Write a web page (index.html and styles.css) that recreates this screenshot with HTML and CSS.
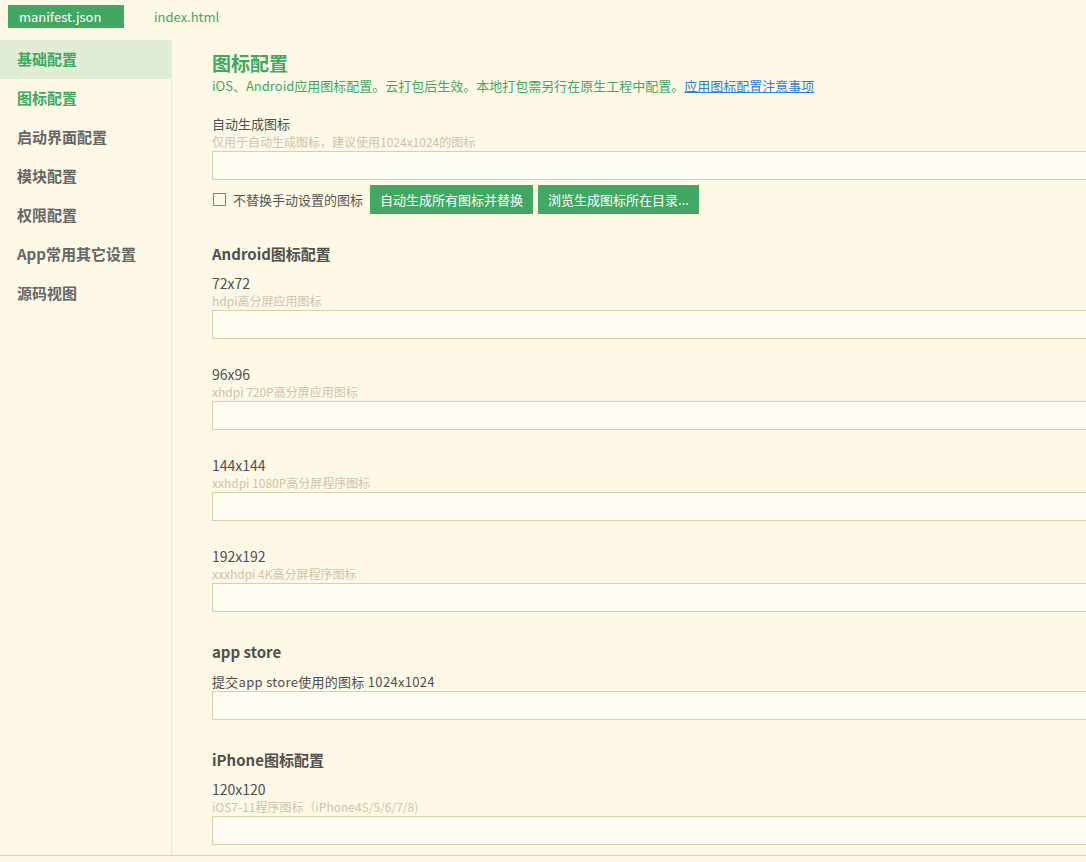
FILE: index.html
```html
<!DOCTYPE html>
<html lang="zh-CN">
<head>
<meta charset="utf-8">
<title>manifest.json</title>
<link rel="stylesheet" href="styles.css">
</head>
<body>
<div class="tabs">
  <div class="tab tab-active">manifest.json</div>
  <div class="tab">index.html</div>
</div>
<div class="main">
  <nav class="sidebar">
    <div class="nav-item nav-active">基础配置</div>
    <div class="nav-item nav-current">图标配置</div>
    <div class="nav-item">启动界面配置</div>
    <div class="nav-item">模块配置</div>
    <div class="nav-item">权限配置</div>
    <div class="nav-item">App常用其它设置</div>
    <div class="nav-item">源码视图</div>
  </nav>
  <section class="content">
    <h1 class="title">图标配置</h1>
    <div class="desc">iOS、Android应用图标配置。云打包后生效。本地打包需另行在原生工程中配置。<a class="link" href="#">应用图标配置注意事项</a></div>

    <div class="field field-first">
      <div class="label label-cjk">自动生成图标</div>
      <div class="hint">仅用于自动生成图标，建议使用1024x1024的图标</div>
      <div class="input"></div>
    </div>
    <div class="actions">
      <span class="checkbox"></span>
      <span class="check-label">不替换手动设置的图标</span>
      <span class="btn">自动生成所有图标并替换</span>
      <span class="btn">浏览生成图标所在目录...</span>
    </div>

    <h2 class="section-title">Android图标配置</h2>
    <div class="field">
      <div class="label">72x72</div>
      <div class="hint">hdpi高分屏应用图标</div>
      <div class="input"></div>
    </div>
    <div class="field">
      <div class="label">96x96</div>
      <div class="hint">xhdpi 720P高分屏应用图标</div>
      <div class="input"></div>
    </div>
    <div class="field">
      <div class="label">144x144</div>
      <div class="hint">xxhdpi 1080P高分屏程序图标</div>
      <div class="input"></div>
    </div>
    <div class="field">
      <div class="label">192x192</div>
      <div class="hint">xxxhdpi 4K高分屏程序图标</div>
      <div class="input"></div>
    </div>

    <h2 class="section-title">app store</h2>
    <div class="field field-store">
      <div class="label label-mixed">提交app store使用的图标 1024x1024</div>
      <div class="input"></div>
    </div>

    <h2 class="section-title">iPhone图标配置</h2>
    <div class="field">
      <div class="label">120x120</div>
      <div class="hint">iOS7-11程序图标（iPhone4S/5/6/7/8)</div>
      <div class="input"></div>
    </div>
  </section>
</div>
</body>
</html>
```
FILE: styles.css
```css
html, body {
  margin: 0;
  padding: 0;
}
body {
  background: #fef8e6;
  font-family: "Noto Sans CJK SC", "Noto Sans", sans-serif;
  color: #555555;
  overflow: hidden;
  width: 1086px;
  height: 862px;
}
.tabs {
  height: 40px;
  box-sizing: border-box;
  padding: 5px 0 0 8px;
  display: flex;
  align-items: flex-start;
  gap: 30px;
}
.tab {
  height: 23px;
  line-height: 23px;
  font-size: 13px;
  color: #3fa863;
}
.tab-active {
  width: 116px;
  box-sizing: border-box;
  padding-left: 11px;
  background: #40a863;
  color: #ffffff;
}
.main {
  display: flex;
  height: 816px;
  border-bottom: 1px solid #dcd1a8;
  box-sizing: border-box;
}
.sidebar {
  width: 172px;
  flex: none;
  box-sizing: border-box;
  border-right: 1px solid #efe8d2;
}
.nav-item {
  height: 39px;
  line-height: 38px;
  padding-left: 17px;
  font-size: 15px;
  font-weight: bold;
  color: #666666;
}
.nav-active {
  background: #e0ecd3;
  color: #3fa863;
}
.nav-current {
  color: #3fa863;
}
.content {
  flex: 1;
  padding: 11px 0 0 40px;
  min-width: 0;
}
.title {
  margin: 0;
  font-size: 19px;
  line-height: 24px;
  font-weight: bold;
  color: #3fa863;
}
.desc {
  margin-top: 2px;
  font-size: 13px;
  line-height: 18px;
  color: #3fa863;
}
.link {
  color: #2b7fd6;
  text-decoration: underline;
}
.field {
  margin-top: 26px;
}
.field-first {
  margin-top: 20px;
}
.label {
  font-size: 14px;
  line-height: 18px;
  color: #4f4f4f;
}
.label-cjk,
.label-mixed {
  font-size: 13px;
}
.label-mixed {
  letter-spacing: 0.3px;
}
.hint {
  font-size: 12px;
  line-height: 18px;
  color: #cdc5ab;
}
.input {
  width: 900px;
  height: 29px;
  box-sizing: border-box;
  border: 1px solid #dcd0a6;
  background: #fffcf4;
}
.actions {
  margin-top: 5px;
  display: flex;
  align-items: center;
  height: 29px;
}
.checkbox {
  width: 13px;
  height: 13px;
  box-sizing: border-box;
  border: 1px solid #40a863;
  margin-left: 1px;
}
.check-label {
  margin-left: 7px;
  font-size: 13px;
  color: #555555;
}
.btn {
  margin-left: 7px;
  height: 29px;
  line-height: 29px;
  padding: 0 10px;
  background: #40a863;
  color: #ffffff;
  font-size: 13px;
}
.btn + .btn {
  margin-left: 5px;
}
.section-title {
  margin: 30px 0 0;
  font-size: 15px;
  line-height: 20px;
  font-weight: bold;
  color: #505050;
}
.section-title + .field {
  margin-top: 10px;
}
.section-title + .field-store {
  margin-top: 11px;
}
```
